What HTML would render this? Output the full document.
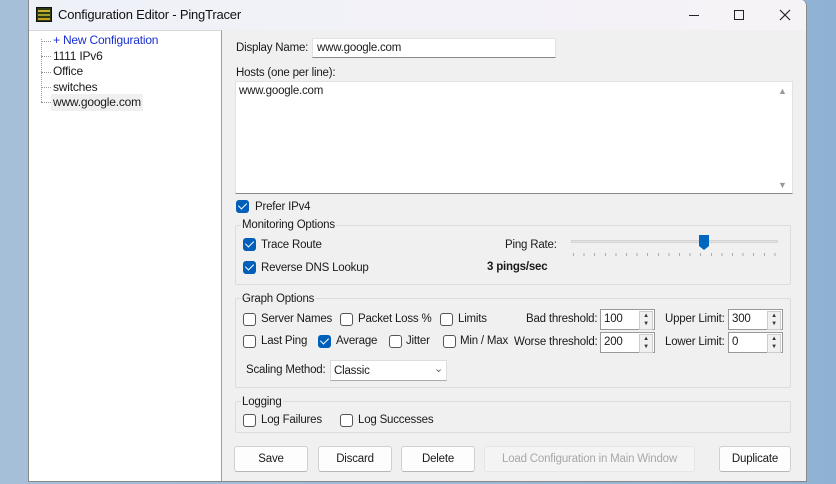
<!DOCTYPE html>
<html><head><meta charset="utf-8"><style>
*{box-sizing:border-box;margin:0;padding:0}
body{width:836px;height:484px;overflow:hidden;background:linear-gradient(90deg,#a6bfd8,#9db9d6 50%,#8fb2d3);font-family:"Liberation Sans",sans-serif;font-size:11.5px;color:#1a1a1a;position:relative;letter-spacing:-0.2px}
.a{position:absolute}
#win{left:28px;top:0;width:779px;height:482px;background:#f0f0f0;border:1px solid #8a8a8a;border-top:none;border-radius:0 6px 0 0;overflow:hidden}
#title{left:0;top:0;width:779px;height:30px;background:linear-gradient(90deg,#eef1f8,#f3f2f8 60%,#f6f3f6);}
#tree{left:0;top:30px;width:193px;height:452px;background:#fff;border-right:1px solid #a0a0a0;border-top:1px solid #d8d8d8}
.cb{position:absolute;width:13px;height:13px;border:1px solid #555;border-radius:3px;background:#fff}
.cb.on{background:#005fb8;border-color:#005fb8}
.cb.on:after{content:"";position:absolute;left:3px;top:0px;width:4px;height:7px;border:solid #fff;border-width:0 1.6px 1.6px 0;transform:rotate(45deg)}
.t{position:absolute;white-space:nowrap;line-height:15px}
.grp{position:absolute;border:1px solid #dcdcdc;border-radius:2px}
.in{position:absolute;background:#fff;border:1px solid #e2e2e2;border-bottom:1px solid #888}
.btn{position:absolute;top:446px;height:26px;background:#fdfdfd;border:1px solid #d0d0d0;border-bottom-color:#b8b8b8;border-radius:3px;text-align:center;line-height:24px}
.spin{position:absolute;right:1px;top:1px;width:14px;height:19px;background:#f0f0f0;border:1px solid #ccc;font-size:6px;line-height:8px;text-align:center;color:#333}
</style></head><body>
<div id="win" class="a">
<div id="title" class="a">
 <div class="a" style="left:7px;top:7px;width:16px;height:15px;background:#2f3a10;border:1px solid #111">
  <div class="a" style="left:1px;top:2px;width:12px;height:2px;background:#c8b030"></div>
  <div class="a" style="left:1px;top:6px;width:12px;height:2px;background:#a0a030"></div>
  <div class="a" style="left:1px;top:10px;width:12px;height:2px;background:#c8a020"></div>
 </div>
 <div class="t" style="left:29px;top:7px;font-size:13px;color:#111">Configuration Editor - PingTracer</div>
 <div class="a" style="left:660px;top:15px;width:10px;height:1px;background:#222"></div>
 <div class="a" style="left:705px;top:10px;width:10px;height:10px;border:1px solid #222"></div>
 <svg class="a" style="left:750px;top:9px" width="12" height="12"><path d="M1 1L11 11M11 1L1 11" stroke="#222" stroke-width="1.2"/></svg>
</div>
<div id="tree" class="a">
 <div class="a" style="left:12px;top:8px;width:1px;height:63px;border-left:1px dotted #999"></div>
 <div class="a" style="left:12px;top:10px;width:10px;border-top:1px dotted #999"></div>
 <div class="a" style="left:12px;top:25px;width:10px;border-top:1px dotted #999"></div>
 <div class="a" style="left:12px;top:41px;width:10px;border-top:1px dotted #999"></div>
 <div class="a" style="left:12px;top:56px;width:10px;border-top:1px dotted #999"></div>
 <div class="a" style="left:12px;top:71px;width:10px;border-top:1px dotted #999"></div>
 <div class="t" style="left:24px;top:2px;color:#1a2fd0;font-size:12px">+ New Configuration</div>
 <div class="t" style="left:24px;top:18px;font-size:12px">1111 IPv6</div>
 <div class="t" style="left:24px;top:33px;font-size:12px">Office</div>
 <div class="t" style="left:24px;top:49px;font-size:12px">switches</div>
 <div class="t" style="left:22px;top:63px;background:#f0f0f0;padding:1px 2px;font-size:12px">www.google.com</div>
</div>
</div>
<div class="t" style="left:236px;top:41px">Display Name:</div>
<div class="in" style="left:312px;top:38px;width:244px;height:20px"></div>
<div class="t" style="left:317px;top:41px">www.google.com</div>
<div class="t" style="left:236px;top:66px">Hosts (one per line):</div>
<div class="in" style="left:235px;top:81px;width:558px;height:113px"></div>
<div class="t" style="left:239px;top:84px">www.google.com</div>
<div class="t" style="left:778px;top:84px;font-size:9px;color:#999">▲</div>
<div class="t" style="left:778px;top:178px;font-size:9px;color:#999">▼</div>

<div class="cb on" style="left:236px;top:200px"></div>
<div class="t" style="left:255px;top:200px">Prefer IPv4</div>

<div class="grp" style="left:235px;top:225px;width:556px;height:60px"></div>
<div class="t" style="left:241px;top:218px;background:#f0f0f0;padding:0 1px">Monitoring Options</div>
<div class="cb on" style="left:243px;top:238px"></div>
<div class="t" style="left:261px;top:238px">Trace Route</div>
<div class="cb on" style="left:243px;top:261px"></div>
<div class="t" style="left:261px;top:261px">Reverse DNS Lookup</div>
<div class="t" style="left:505px;top:238px">Ping Rate:</div>
<div class="t" style="left:487px;top:260px;font-weight:bold">3 pings/sec</div>
<div class="a" style="left:571px;top:240px;width:207px;height:3px;background:#e4e4e4;border:1px solid #d4d4d4"></div>
<div class="a" style="left:573px;top:253px;width:204px;height:3px;background:repeating-linear-gradient(90deg,#aaa 0 1px,transparent 1px 10.6px)"></div>
<svg class="a" style="left:698px;top:234px" width="12" height="17"><path d="M1 1H11V12L6 16L1 12Z" fill="#0067c0"/></svg>

<div class="grp" style="left:235px;top:298px;width:556px;height:90px"></div>
<div class="t" style="left:241px;top:292px;background:#f0f0f0;padding:0 1px">Graph Options</div>
<div class="cb" style="left:243px;top:313px"></div><div class="t" style="left:261px;top:312px">Server Names</div>
<div class="cb" style="left:340px;top:313px"></div><div class="t" style="left:358px;top:312px">Packet Loss %</div>
<div class="cb" style="left:440px;top:313px"></div><div class="t" style="left:458px;top:312px">Limits</div>
<div class="cb" style="left:243px;top:335px"></div><div class="t" style="left:261px;top:334px">Last Ping</div>
<div class="cb on" style="left:318px;top:335px"></div><div class="t" style="left:336px;top:334px">Average</div>
<div class="cb" style="left:389px;top:335px"></div><div class="t" style="left:406px;top:334px">Jitter</div>
<div class="cb" style="left:443px;top:335px"></div><div class="t" style="left:460px;top:334px">Min / Max</div>
<div class="t" style="left:526px;top:312px">Bad threshold:</div>
<div class="t" style="left:514px;top:335px">Worse threshold:</div>
<div class="t" style="left:665px;top:312px">Upper Limit:</div>
<div class="t" style="left:665px;top:335px">Lower Limit:</div>
<div class="in" style="left:600px;top:309px;width:55px;height:21px;border-color:#999"><span class="t" style="left:3px;top:2px">100</span><div class="spin">▲<br>▼</div></div>
<div class="in" style="left:600px;top:332px;width:55px;height:21px;border-color:#999"><span class="t" style="left:3px;top:2px">200</span><div class="spin">▲<br>▼</div></div>
<div class="in" style="left:728px;top:309px;width:55px;height:21px;border-color:#999"><span class="t" style="left:3px;top:2px">300</span><div class="spin">▲<br>▼</div></div>
<div class="in" style="left:728px;top:332px;width:55px;height:21px;border-color:#999"><span class="t" style="left:3px;top:2px">0</span><div class="spin">▲<br>▼</div></div>
<div class="t" style="left:246px;top:363px">Scaling Method:</div>
<div class="in" style="left:330px;top:360px;width:117px;height:21px;border:1px solid #ddd;border-bottom-color:#aaa"><span class="t" style="left:3px;top:3px">Classic</span><span class="t" style="left:103px;top:1px;font-size:11px;color:#666">⌄</span></div>

<div class="grp" style="left:235px;top:401px;width:556px;height:32px"></div>
<div class="t" style="left:241px;top:395px;background:#f0f0f0;padding:0 1px">Logging</div>
<div class="cb" style="left:243px;top:414px"></div><div class="t" style="left:261px;top:413px">Log Failures</div>
<div class="cb" style="left:340px;top:414px"></div><div class="t" style="left:358px;top:413px">Log Successes</div>

<div class="btn" style="left:234px;width:74px">Save</div>
<div class="btn" style="left:318px;width:74px">Discard</div>
<div class="btn" style="left:401px;width:74px">Delete</div>
<div class="btn" style="left:484px;width:211px;background:#f4f4f4;border-color:#e6e6e6;color:#a8a8a8">Load Configuration in Main Window</div>
<div class="btn" style="left:719px;width:72px">Duplicate</div>
</body></html>
